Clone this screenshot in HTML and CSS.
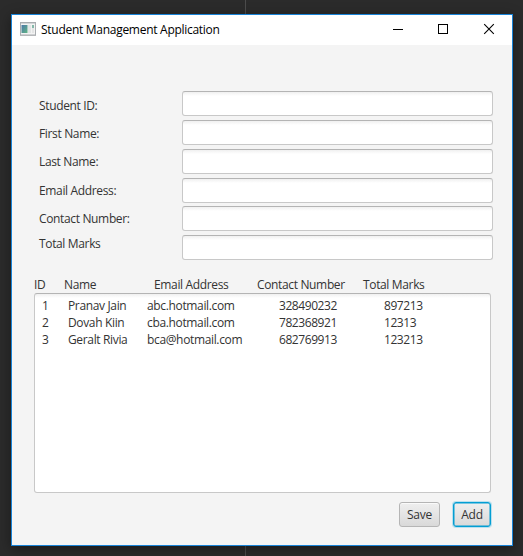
FILE: index.html
```html
<!DOCTYPE html>
<html lang="en">
<head>
<meta charset="utf-8">
<title>Student Management Application</title>
<link rel="stylesheet" href="styles.css">
</head>
<body>
<div class="window">
  <header class="titlebar">
    <svg class="app-icon" width="16" height="14" viewBox="0 0 16 14">
      <defs><linearGradient id="pane" x1="0" y1="0" x2="1" y2="1"><stop offset="0" stop-color="#4a78a8"/><stop offset="1" stop-color="#62b585"/></linearGradient></defs>
      <rect x=".5" y=".5" width="15" height="12.5" fill="#f3f3f3" stroke="#a9adb0"/>
      <path d="M1 1.5h14" stroke="#d2d5d7"/>
      <rect x="1.5" y="3" width="6" height="8" fill="url(#pane)"/>
      <path d="M8 3h3v8H8z" fill="#e2e5e5"/>
      <path d="M12 3h2v3h-2z" fill="#83b8a9"/>
      <path d="M12 6h2v5h-2z" fill="#e4e5e5"/>
      <path d="M0 13.5h16" stroke="#b5b7b9"/>
    </svg>
    <h1 class="title">Student Management Application</h1>
    <div class="controls">
      <svg width="46" height="30" viewBox="0 0 46 30" shape-rendering="crispEdges"><path d="M18 14.5h10" stroke="#000"/></svg>
      <svg width="46" height="30" viewBox="0 0 46 30" shape-rendering="crispEdges"><path d="M17.500 9.500h9v9h-9z" fill="none" stroke="#000"/></svg>
      <svg width="46" height="30" viewBox="0 0 46 30"><path d="M17.200 9.200l9.600 9.600M26.800 9.200l-9.600 9.600" stroke="#000" stroke-width="1.100"/></svg>
    </div>
  </header>
  <main class="content">
    <form class="form">
      <div class="labels">
        <label for="sid">Student ID:</label>
        <label for="first">First Name:</label>
        <label for="last">Last Name:</label>
        <label class="tall" for="email">Email Address:</label>
        <label for="contact">Contact Number:</label>
        <label class="short" for="marks">Total Marks</label>
      </div>
      <div class="fields">
        <input id="sid"><input id="first"><input id="last"><input id="email"><input id="contact" class="close"><input id="marks">
      </div>
    </form>
    <div class="headings">
      <span>ID</span><span>Name</span><span>Email Address</span><span>Contact Number</span><span>Total Marks</span>
    </div>
    <div class="list">
      <div class="row"><span>1</span><span>Pranav Jain</span><span>abc.hotmail.com</span><span class="num">328490232</span><span class="num">897213</span></div>
      <div class="row"><span>2</span><span>Dovah Kiin</span><span>cba.hotmail.com</span><span class="num">782368921</span><span class="num">12313</span></div>
      <div class="row"><span>3</span><span>Geralt Rivia</span><span>bca@hotmail.com</span><span class="num">682769913</span><span class="num">123213</span></div>
    </div>
    <div class="actions">
      <button class="save" type="button">Save</button>
      <button class="add" type="button">Add</button>
    </div>
  </main>
</div>
</body>
</html>
```
FILE: styles.css
```css
* { box-sizing: border-box; }
body {
  margin: 0;
  width: 523px;
  height: 556px;
  overflow: hidden;
  padding: 14px 10px 0 11px;
  background: linear-gradient(#4c4c4c, #4c4c4c) 245px 0 / 1px 100% no-repeat, #2b2b2b;
  font: 12px/17px "Open Sans", "Noto Sans", sans-serif;
  letter-spacing: -0.35px;
  color: #333;
}
.window {
  width: 502px;
  height: 532px;
  border: 1px solid #1883d7;
  background: #f4f4f4;
  box-shadow: 0 3px 12px rgba(0, 0, 0, .4);
}
.titlebar {
  display: flex;
  align-items: center;
  height: 30px;
  padding-left: 8px;
  background: #fff;
  color: #000;
}
.app-icon { margin-top: -2px; }
.title {
  margin: -2px 0 0 5px;
  font-size: 12px;
  font-weight: 400;
  letter-spacing: -0.28px;
  white-space: nowrap;
}
.controls { display: flex; margin: 0 -1px 0 auto; }
.content { padding: 46px 19px 0 22px; }
.form { display: flex; margin: 0; height: 169px; padding-left: 5px; }
.labels { width: 143px; padding-top: 1px; }
.labels label { display: block; height: 28px; line-height: 28px; }
.labels .tall { height: 29px; line-height: 30px; }
.labels .short { height: 22px; line-height: 22px; }
.fields { display: flex; flex-direction: column; gap: 4px; }
.fields input {
  width: 311px;
  height: 25px;
  border: 1px solid #c8c8c8;
  border-top-color: #b4b4b4;
  border-radius: 3px;
  background: linear-gradient(#f0f0f0, #fff 4px);
  font: inherit;
  outline: none;
}
.fields .close { margin-top: -1px; }
.headings, .row { display: grid; white-space: nowrap; }
.headings {
  grid-template-columns: 30px 90px 103px 106px 80px;
  height: 33px;
  padding-top: 16px;
}
.list {
  width: 457px;
  height: 200px;
  padding: 3px 7px;
  border: 1px solid #c8c8c8;
  border-top-color: #b4b4b4;
  border-radius: 3px;
  background: linear-gradient(#f0f0f0, #fff 4px);
}
.row { grid-template-columns: 26px 79px 132px 105px 80px; height: 17px; }
.num { letter-spacing: -0.43px; }
.actions { display: flex; gap: 13px; padding: 9px 0 0 365px; }
.actions button {
  height: 25px;
  padding: 0;
  border: 1px solid #b5b5b5;
  border-radius: 3px;
  background: linear-gradient(#efefef, #d9d9d9);
  box-shadow: inset 0 1px #fafafa;
  color: #333;
  font: inherit;
  letter-spacing: -0.2px;
}
.actions .save { width: 41px; }
.actions .add {
  width: 38px;
  border-color: #039ed3;
  box-shadow: inset 0 0 0 .5px #039ed3, 0 0 0 1px #b9e0ee;
}
```
